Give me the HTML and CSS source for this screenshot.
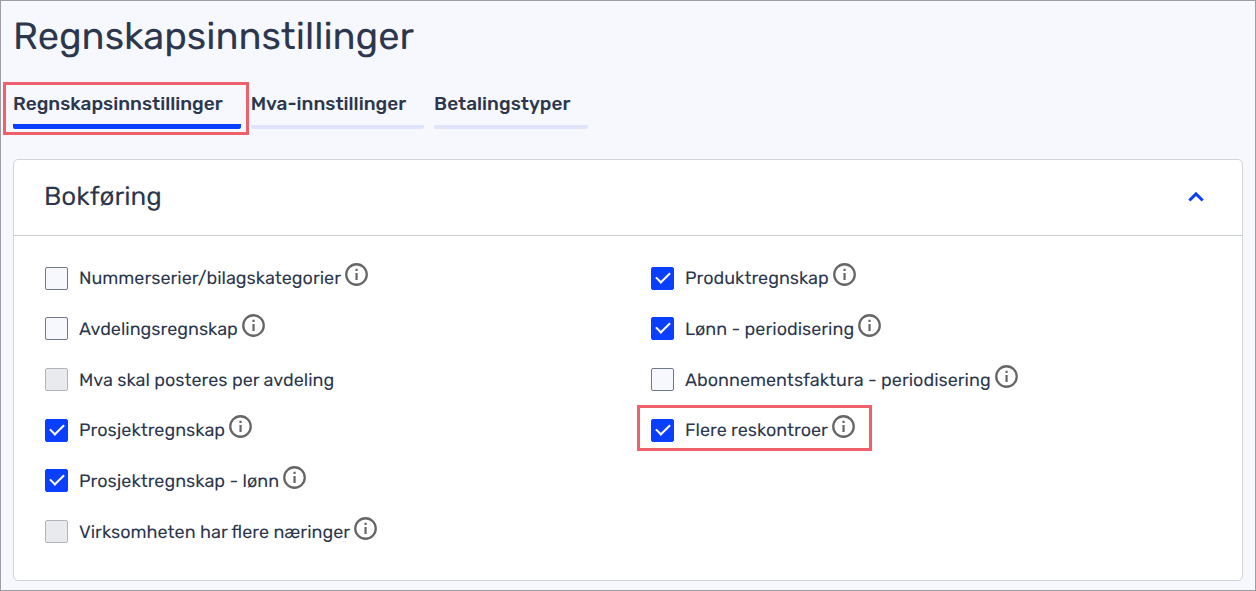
FILE: index.html
```html
<!DOCTYPE html>
<html lang="no">
<head>
<meta charset="utf-8">
<title>Regnskapsinnstillinger</title>
<link rel="stylesheet" href="styles.css">
</head>
<body>
<svg class="sprite" aria-hidden="true">
  <symbol id="info" viewBox="0 0 24 24">
    <circle cx="12" cy="12" r="10.7" fill="none" stroke="currentColor" stroke-width="2.400"/>
    <path d="M10.900 6h2.300v2.400h-2.300zM10.900 10.400h2.300V17.800h-2.300z" fill="currentColor"/>
  </symbol>
</svg>
<main class="page">
  <h1 class="title">Regnskapsinnstillinger</h1>
  <nav class="tabs" role="tablist">
    <button class="tab tab-active marked" role="tab" aria-selected="true">Regnskapsinnstillinger</button>
    <button class="tab" role="tab" aria-selected="false">Mva-innstillinger</button>
    <button class="tab" role="tab" aria-selected="false">Betalingstyper</button>
  </nav>
  <section class="panel">
    <header class="panel-head">
      <h2 class="panel-title">Bokføring</h2>
      <button class="collapse" aria-label="Skjul">
        <svg width="16" height="10" viewBox="0 0 16 10"><path d="M1.300 8.500 8 1.900l6.700 6.600" fill="none" stroke="currentColor" stroke-width="3"/></svg>
      </button>
    </header>
    <div class="options">
      <div class="option"><input class="box" type="checkbox" id="o1"><label for="o1">Nummerserier/bilagskategorier</label><button class="info" aria-label="Info"><svg><use href="#info"/></svg></button></div>
      <div class="option"><input class="box" type="checkbox" id="o2"><label for="o2">Avdelingsregnskap</label><button class="info" aria-label="Info"><svg><use href="#info"/></svg></button></div>
      <div class="option"><input class="box" type="checkbox" id="o3" disabled><label for="o3">Mva skal posteres per avdeling</label></div>
      <div class="option"><input class="box" type="checkbox" id="o4" checked><label for="o4">Prosjektregnskap</label><button class="info" aria-label="Info"><svg><use href="#info"/></svg></button></div>
      <div class="option"><input class="box" type="checkbox" id="o5" checked><label for="o5">Prosjektregnskap - lønn</label><button class="info" aria-label="Info"><svg><use href="#info"/></svg></button></div>
      <div class="option"><input class="box" type="checkbox" id="o6" disabled><label for="o6">Virksomheten har flere næringer</label><button class="info" aria-label="Info"><svg><use href="#info"/></svg></button></div>
      <div class="option"><input class="box" type="checkbox" id="o7" checked><label for="o7">Produktregnskap</label><button class="info" aria-label="Info"><svg><use href="#info"/></svg></button></div>
      <div class="option"><input class="box" type="checkbox" id="o8" checked><label for="o8">Lønn - periodisering</label><button class="info" aria-label="Info"><svg><use href="#info"/></svg></button></div>
      <div class="option"><input class="box" type="checkbox" id="o9"><label for="o9">Abonnementsfaktura - periodisering</label><button class="info" aria-label="Info"><svg><use href="#info"/></svg></button></div>
      <div class="option marked"><input class="box" type="checkbox" id="o10" checked><label for="o10">Flere reskontroer</label><button class="info" aria-label="Info"><svg><use href="#info"/></svg></button></div>
    </div>
  </section>
</main>
</body>
</html>
```
FILE: styles.css
```css
* { box-sizing: border-box; }

body {
  margin: 0;
  background: #f7f8fd;
  color: #2c374e;
  font-family: Rubik, Roboto, sans-serif;
  text-rendering: geometricPrecision;
}

button {
  padding: 0;
  border: 0;
  background: none;
  color: inherit;
  font: inherit;
}

.sprite { position: absolute; width: 0; height: 0; }

.page {
  display: flex;
  flex-direction: column;
  min-height: 100vh;
  padding: 12px 12px 9px;
  border: 1px solid #9b9da3;
}

.title {
  margin: 0;
  font-size: 38px;
  font-weight: 400;
  line-height: 46px;
}

.tabs {
  display: flex;
  gap: 10px;
  margin: 30px 0;
}

.tab {
  position: relative;
  height: 40px;
  padding: 0 18px 6px 0;
  border-bottom: 4px solid #e0e4fb;
  border-radius: 2px;
  font-size: 19px;
  font-weight: 500;
  line-height: 26px;
  text-align: left;
}

.tab-active { border-bottom-width: 5px; border-bottom-color: #0b3fff; padding-bottom: 5px; }

.panel {
  display: flex;
  flex: 1;
  flex-direction: column;
  border: 1px solid #d2d4da;
  border-radius: 5px;
  background: #fff;
}

.panel-head {
  display: flex;
  align-items: center;
  justify-content: space-between;
  height: 76px;
  padding: 0 38px 2px 30px;
  border-bottom: 1px solid #cccdd0;
}

.panel-title {
  margin: 0;
  font-size: 26px;
  font-weight: 400;
  line-height: 32px;
}

.collapse { color: #0b3fff; }
.collapse svg { display: block; }

.options {
  display: grid;
  flex: 1;
  grid-auto-flow: column;
  grid-template-rows: repeat(6, 1fr);
  grid-template-columns: 1fr 1fr;
  column-gap: 46px;
  padding: 17px 31px 23px;
}

.option {
  position: relative;
  display: flex;
  align-items: center;
  justify-self: start;
  font-size: 18px;
  line-height: 24px;
}

.box {
  display: grid;
  place-items: center;
  width: 23px;
  height: 23px;
  margin: 0 11px 0 0;
  appearance: none;
  border: 1px solid #70788c;
  border-radius: 2px;
  background: #f7f8fd;
}

.box:disabled { border-color: #b0b3bb; background: #e9eaee; }
.box:checked { border-color: #0b3fff; background: #0b3fff; }

.box:checked::before {
  content: "";
  width: 12px;
  height: 6px;
  margin-bottom: 5px;
  border: solid #fff;
  border-width: 0 0 2px 2px;
  transform: rotate(-45deg);
}

.info {
  margin: 0 0 7px 4px;
  color: #666;
}

.info svg { display: block; width: 23px; height: 23px; }

.marked::after {
  content: "";
  position: absolute;
  border: 3px solid #ef606d;
  pointer-events: none;
}

.tab.marked::after { inset: -7px -8px -11px -10px; }
.option.marked::after { inset: 0 -17px 5px -14px; }
```
